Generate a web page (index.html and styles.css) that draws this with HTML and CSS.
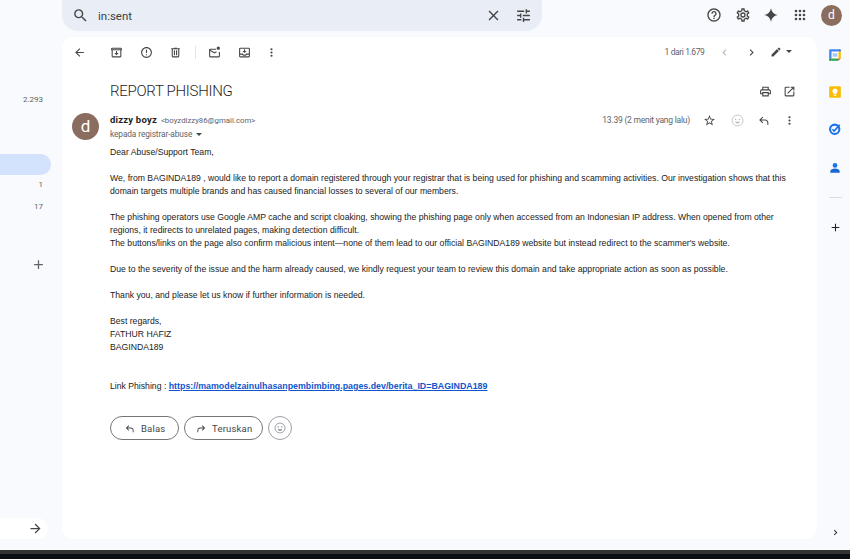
FILE: index.html
```html
<!DOCTYPE html>
<html lang="en">
<head>
    <meta charset="UTF-8">
    <title>REPORT PHISHING</title>
    <link rel="stylesheet" href="styles.css">
</head>
<body>
<div class="app">
    <div class="topbar">
        <div class="search">
            <svg class="icon-search" viewBox="0 0 24 24"><path d="M15.5 14h-.79l-.28-.27A6.47 6.47 0 0 0 16 9.5 6.5 6.5 0 1 0 9.5 16c1.61 0 3.09-.59 4.23-1.57l.27.28v.79l5 4.99L20.49 19l-4.99-5zm-6 0C7.01 14 5 11.99 5 9.5S7.01 5 9.5 5 14 7.01 14 9.5 11.99 14 9.5 14z"/></svg>
            <div class="query">in:sent</div>
            <svg class="icon-close" viewBox="0 0 24 24"><path d="M19 6.41 17.59 5 12 10.59 6.41 5 5 6.41 10.59 12 5 17.59 6.41 19 12 13.41 17.59 19 19 17.59 13.41 12z"/></svg>
            <svg class="icon-tune" viewBox="0 0 24 24"><path d="M3 17v2h6v-2H3zM3 5v2h10V5H3zm10 16v-2h8v-2h-8v-2h-2v6h2zM7 9v2H3v2h4v2h2V9H7zm14 4v-2H11v2h10zm-6-4h2V7h4V5h-4V3h-2v6z"/></svg>
        </div>
        <div class="top-icons">
            <svg class="top-icon" viewBox="0 0 24 24"><path d="M11 18h2v-2h-2v2zm1-16C6.48 2 2 6.48 2 12s4.48 10 10 10 10-4.48 10-10S17.52 2 12 2zm0 18c-4.41 0-8-3.59-8-8s3.59-8 8-8 8 3.59 8 8-3.59 8-8 8zm0-14c-2.21 0-4 1.79-4 4h2c0-1.1.9-2 2-2s2 .9 2 2c0 2-3 1.75-3 5h2c0-2.25 3-2.5 3-5 0-2.21-1.79-4-4-4z"/></svg>
            <svg class="top-icon" viewBox="0 0 24 24"><path d="M19.43 12.98c.04-.32.07-.64.07-.98s-.03-.66-.07-.98l2.11-1.65a.5.5 0 0 0 .12-.64l-2-3.46a.5.5 0 0 0-.61-.22l-2.49 1a7.3 7.3 0 0 0-1.69-.98l-.38-2.65A.49.49 0 0 0 14 2h-4a.49.49 0 0 0-.49.42l-.38 2.65c-.61.25-1.17.59-1.69.98l-2.49-1a.5.5 0 0 0-.61.22l-2 3.46a.49.49 0 0 0 .12.64l2.11 1.65c-.04.32-.07.65-.07.98s.03.66.07.98l-2.11 1.65a.5.5 0 0 0-.12.64l2 3.46c.12.22.39.3.61.22l2.49-1c.52.4 1.08.73 1.69.98l.38 2.65c.03.24.24.42.49.42h4c.25 0 .46-.18.49-.42l.38-2.65c.61-.25 1.17-.59 1.69-.98l2.49 1c.23.09.49 0 .61-.22l2-3.46a.5.5 0 0 0-.12-.64l-2.11-1.65zM17.45 11.27c.04.31.05.52.05.73s-.02.43-.05.73l-.14 1.13.89.7 1.08.84-.7 1.21-1.27-.51-1.04-.42-.9.68c-.43.32-.84.56-1.25.73l-1.06.43-.16 1.13-.2 1.35h-1.4l-.19-1.35-.16-1.13-1.06-.43a5.7 5.7 0 0 1-1.23-.71l-.91-.7-1.06.43-1.27.51-.7-1.21 1.08-.84.89-.7-.14-1.13A8.3 8.3 0 0 1 6.5 12c0-.2.02-.43.05-.73l.14-1.13-.89-.7-1.08-.84.7-1.21 1.27.51 1.04.42.9-.68c.43-.32.84-.56 1.25-.73l1.06-.43.16-1.13.2-1.35h1.39l.19 1.35.16 1.13 1.06.43c.43.18.83.41 1.23.71l.91.7 1.06-.43 1.27-.51.7 1.21-1.07.85-.89.7.14 1.13zM12 8a4 4 0 1 0 0 8 4 4 0 0 0 0-8zm0 6a2 2 0 1 1 0-4 2 2 0 0 1 0 4z"/></svg>
            <svg class="top-icon" viewBox="0 0 24 24"><path d="M12 2c.9 5.6 4.4 9.1 10 10-5.6.9-9.1 4.4-10 10-.9-5.6-4.4-9.1-10-10 5.6-.9 9.1-4.4 10-10z"/></svg>
            <svg class="top-icon" viewBox="0 0 24 24"><path d="M6 8a2 2 0 1 0 0-4 2 2 0 0 0 0 4zm6 12a2 2 0 1 0 0-4 2 2 0 0 0 0 4zm-6 0a2 2 0 1 0 0-4 2 2 0 0 0 0 4zm0-6a2 2 0 1 0 0-4 2 2 0 0 0 0 4zm6 0a2 2 0 1 0 0-4 2 2 0 0 0 0 4zm6-6a2 2 0 1 0 0-4 2 2 0 0 0 0 4zm-6 0a2 2 0 1 0 0-4 2 2 0 0 0 0 4zm6 6a2 2 0 1 0 0-4 2 2 0 0 0 0 4zm0 6a2 2 0 1 0 0-4 2 2 0 0 0 0 4z"/></svg>
            <div class="avatar-small">d</div>
        </div>
    </div>

    <div class="middle">
        <div class="sidebar">
            <div class="count count-first">2.293</div>
            <div class="active-item"></div>
            <div class="count count-one">1</div>
            <div class="count count-two">17</div>
            <div class="plus-row">
                <svg class="icon-plus" viewBox="0 0 24 24"><path d="M19 13h-6v6h-2v-6H5v-2h6V5h2v6h6v2z"/></svg>
            </div>
            <div class="side-pill">
                <svg class="icon-arrow" viewBox="0 0 24 24"><path d="M12 4l-1.41 1.41L16.17 11H4v2h12.17l-5.58 5.59L12 20l8-8z"/></svg>
            </div>
        </div>

        <div class="card">
            <div class="toolbar">
                <svg class="tool tool-back" viewBox="0 0 24 24"><path d="M20 11H7.83l5.59-5.59L12 4l-8 8 8 8 1.41-1.41L7.83 13H20v-2z"/></svg>
                <svg class="tool" viewBox="0 0 24 24"><path d="M20 3H4a2 2 0 0 0-2 2v3h1v11a2 2 0 0 0 2 2h14a2 2 0 0 0 2-2V8h1V5a2 2 0 0 0-2-2zm-1 16H5V8h14v11zM4 6V5h16v1H4zm9 3h-2v4H8l4 4 4-4h-3V9z"/></svg>
                <svg class="tool" viewBox="0 0 24 24"><path d="M11 7h2v6h-2zm0 8h2v2h-2zm1-13C6.48 2 2 6.48 2 12s4.48 10 10 10 10-4.48 10-10S17.52 2 12 2zm0 18c-4.41 0-8-3.59-8-8s3.59-8 8-8 8 3.59 8 8-3.59 8-8 8z"/></svg>
                <svg class="tool" viewBox="0 0 24 24"><path d="M15 4V3H9v1H4v2h1v13a2 2 0 0 0 2 2h10a2 2 0 0 0 2-2V6h1V4h-5zm2 15H7V6h10v13zM9 8h2v9H9zm4 0h2v9h-2z"/></svg>
                <div class="tool-sep"></div>
                <svg class="tool" viewBox="0 0 24 24"><path d="M4 6h11V4H4a2 2 0 0 0-2 2v12a2 2 0 0 0 2 2h16a2 2 0 0 0 2-2V10h-2v8H4V8l8 5 4.2-2.6-1.2-1.6L12 10.6 4 6zm15-6a3 3 0 1 0 0 6 3 3 0 0 0 0-6z" transform="translate(0 1)"/></svg>
                <svg class="tool tool-snooze" viewBox="0 0 24 24"><path d="M20 3H4a2 2 0 0 0-2 2v14a2 2 0 0 0 2 2h16a2 2 0 0 0 2-2V5a2 2 0 0 0-2-2zm0 16H4v-3h3.5c.7 1.2 2.4 2 4.5 2s3.800-.8 4.500-2H20v3zm0-5h-5c0 1.200-1.300 2-3 2s-3-.8-3-2H4V5h16v9zm-7-8h-2v3H8l4 4 4-4h-3V6z"/></svg>
                <svg class="tool tool-more" viewBox="0 0 24 24"><path d="M12 8a2 2 0 1 0 0-4 2 2 0 0 0 0 4zm0 2a2 2 0 1 0 0 4 2 2 0 0 0 0-4zm0 6a2 2 0 1 0 0 4 2 2 0 0 0 0-4z"/></svg>
                <div class="pager">1 dari 1.679</div>
                <svg class="chev chev-off" viewBox="0 0 24 24"><path d="M15.41 7.41 14 6l-6 6 6 6 1.41-1.41L10.830 12z"/></svg>
                <svg class="chev" viewBox="0 0 24 24"><path d="M8.590 16.590 10 18l6-6-6-6-1.410 1.410L13.170 12z"/></svg>
                <svg class="tool-pen" viewBox="0 0 24 24"><path d="M3 17.250V21h3.750L17.810 9.940l-3.750-3.750L3 17.250zM20.710 7.040a1 1 0 0 0 0-1.410l-2.340-2.340a1 1 0 0 0-1.410 0l-1.830 1.830 3.750 3.750 1.830-1.830z"/></svg>
                <div class="caret"></div>
            </div>

            <div class="subject-row">
                <div class="subject">REPORT PHISHING</div>
                <svg class="subject-icon" viewBox="0 0 24 24"><path d="M19 8h-1V3H6v5H5a3 3 0 0 0-3 3v6h4v4h12v-4h4v-6a3 3 0 0 0-3-3zM8 5h8v3H8V5zm8 14H8v-4h8v4zm2-4v-2H6v2H4v-4a1 1 0 0 1 1-1h14a1 1 0 0 1 1 1v4h-2z"/></svg>
                <svg class="subject-icon" viewBox="0 0 24 24"><path d="M19 19H5V5h7V3H5a2 2 0 0 0-2 2v14a2 2 0 0 0 2 2h14a2 2 0 0 0 2-2v-7h-2v7zM14 3v2h3.590l-9.830 9.830 1.410 1.410L19 6.410V10h2V3h-7z"/></svg>
            </div>

            <div class="message">
                <div class="avatar">d</div>
                <div class="message-main">
                    <div class="sender-row">
                        <div class="sender-info">
                            <div class="sender"><span class="sender-name">dizzy boyz</span> <span class="sender-mail">&lt;boyzdizzy86@gmail.com&gt;</span></div>
                            <div class="recipient">kepada registrar-abuse <span class="caret caret-small"></span></div>
                        </div>
                        <div class="msg-time">13.39 (2 menit yang lalu)</div>
                        <svg class="msg-icon msg-star" viewBox="0 0 24 24"><path d="M22 9.240l-7.190-.62L12 2 9.190 8.630 2 9.240l5.460 4.730L5.820 21 12 17.270 18.180 21l-1.630-7.030L22 9.240zM12 15.400l-3.760 2.270 1-4.280-3.320-2.880 4.380-.38L12 6.100l1.710 4.040 4.380.38-3.320 2.880 1 4.280L12 15.400z"/></svg>
                        <svg class="msg-icon" viewBox="0 0 24 24"><circle cx="12" cy="12" r="10" fill="none" stroke="#b5b8bb" stroke-width="1.500"/><circle cx="8.500" cy="10" r="1.300" fill="#b5b8bb"/><circle cx="15.500" cy="10" r="1.300" fill="#b5b8bb"/><path d="M7.500 14.500h9c-.6 2-2.400 3-4.500 3s-3.900-1-4.500-3z" fill="#b5b8bb"/></svg>
                        <svg class="msg-icon" viewBox="0 0 24 24"><path d="M21 20h-2v-4c0-2.200-1.800-4-4-4H7.830l3.590 3.590L10 17l-6-6 6-6 1.420 1.410L7.830 10H15c3.300 0 6 2.700 6 6v4z"/></svg>
                        <svg class="msg-icon msg-more" viewBox="0 0 24 24"><path d="M12 8a2 2 0 1 0 0-4 2 2 0 0 0 0 4zm0 2a2 2 0 1 0 0 4 2 2 0 0 0 0-4zm0 6a2 2 0 1 0 0 4 2 2 0 0 0 0-4z"/></svg>
                    </div>
                    <div class="body-text">
                        <p>Dear Abuse/Support Team,</p>
                        <p>We, from BAGINDA189 , would like to report a domain registered through your registrar that is being used for phishing and scamming activities. Our investigation shows that this<br>domain targets multiple brands and has caused financial losses to several of our members.</p>
                        <p>The phishing operators use Google AMP cache and script cloaking, showing the phishing page only when accessed from an Indonesian IP address. When opened from other<br>regions, it redirects to unrelated pages, making detection difficult.<br>The buttons/links on the page also confirm malicious intent—none of them lead to our official BAGINDA189 website but instead redirect to the scammer's website.</p>
                        <p>Due to the severity of the issue and the harm already caused, we kindly request your team to review this domain and take appropriate action as soon as possible.</p>
                        <p>Thank you, and please let us know if further information is needed.</p>
                        <p>Best regards,<br>FATHUR HAFIZ<br>BAGINDA189</p>
                        <p class="link-line">Link Phishing : <a class="phish-link" href="#">https://mamodelzainulhasanpembimbing.pages.dev/berita_ID=BAGINDA189</a></p>
                    </div>
                    <div class="actions">
                        <div class="action-btn btn-reply">
                            <svg class="btn-icon" viewBox="0 0 24 24"><path d="M21 20h-2v-4c0-2.200-1.800-4-4-4H7.830l3.590 3.590L10 17l-6-6 6-6 1.420 1.410L7.830 10H15c3.300 0 6 2.700 6 6v4z"/></svg>
                            Balas
                        </div>
                        <div class="action-btn btn-forward">
                            <svg class="btn-icon" viewBox="0 0 24 24"><path d="M3 20h2v-4c0-2.200 1.800-4 4-4h7.170l-3.590 3.590L14 17l6-6-6-6-1.420 1.410L16.170 10H9c-3.300 0-6 2.700-6 6v4z"/></svg>
                            Teruskan
                        </div>
                        <div class="emoji-btn">
                            <svg class="emoji-icon" viewBox="0 0 24 24"><circle cx="12" cy="12" r="10" fill="none" stroke="#80868b" stroke-width="1.500"/><circle cx="8.500" cy="10" r="1.300" fill="#80868b"/><circle cx="15.500" cy="10" r="1.300" fill="#80868b"/><path d="M7.500 14.500h9c-.6 2-2.400 3-4.500 3s-3.900-1-4.500-3z" fill="#80868b"/></svg>
                        </div>
                    </div>
                </div>
            </div>
        </div>

        <div class="rail">
            <svg class="rail-app" viewBox="0 0 24 24"><rect x="2" y="2" width="20" height="20" rx="2" fill="#fff"/><path d="M2 4a2 2 0 0 1 2-2h14v4H6v12H2z" fill="#4285f4"/><path d="M18 2h2a2 2 0 0 1 2 2v2h-4z" fill="#1967d2"/><path d="M18 6h4v12h-4z" fill="#fbbc04"/><path d="M6 18h12v4H6z" fill="#34a853"/><path d="M2 18h4v4H4a2 2 0 0 1-2-2z" fill="#188038"/><path d="M18 18h4l-4 4z" fill="#ea4335"/><rect x="8" y="9" width="8" height="6" fill="#a8c7fa"/></svg>
            <svg class="rail-app" viewBox="0 0 24 24"><rect x="2" y="2" width="20" height="20" rx="2" fill="#fbbc04"/><path d="M12 6a4.500 4.500 0 0 0-2.500 8.200V16h5v-1.800A4.500 4.500 0 0 0 12 6z" fill="#fff"/><rect x="10" y="17" width="4" height="1.500" fill="#fff"/></svg>
            <svg class="rail-app" viewBox="0 0 24 24"><circle cx="11.500" cy="12.500" r="8" fill="none" stroke="#1a73e8" stroke-width="3.500"/><path d="M7.500 12.500l3 3L20 5" fill="none" stroke="#1a73e8" stroke-width="2.800"/></svg>
            <svg class="rail-app rail-person" viewBox="0 0 24 24"><circle cx="12" cy="7.500" r="4" fill="#1a73e8"/><path d="M4 20v-2.500c0-2.500 4-4.500 8-4.500s8 2 8 4.500V20z" fill="#1967d2"/></svg>
            <div class="rail-sep"></div>
            <svg class="rail-plus" viewBox="0 0 24 24"><path d="M19 13h-6v6h-2v-6H5v-2h6V5h2v6h6v2z"/></svg>
            <svg class="rail-chev" viewBox="0 0 24 24"><path d="M8.590 16.590 10 18l6-6-6-6-1.410 1.410L13.170 12z"/></svg>
        </div>
    </div>

    <div class="taskbar"></div>
</div>
</body>
</html>
```

FILE: styles.css
```css
* {
    box-sizing: border-box;
}

html, body {
    margin: 0;
    height: 100%;
    overflow: hidden;
}

body {
    background-color: #f8fafd;
    font-family: "Liberation Sans", Arial, sans-serif;
    color: #202124;
}

svg {
    display: block;
    flex: none;
    fill: #444746;
}

.app {
    display: flex;
    flex-direction: column;
    width: 850px;
    height: 559px;
}

/* top bar */
.topbar {
    display: flex;
    height: 37px;
    padding-left: 62px;
}

.search {
    display: flex;
    align-items: center;
    width: 480px;
    height: 31px;
    padding: 0 10px;
    background-color: #e9eef6;
    border-radius: 0 0 16px 16px;
}

.icon-search {
    width: 17px;
    height: 17px;
}

.query {
    flex: 1;
    padding-left: 9px;
    font-family: Roboto, sans-serif;
    font-size: 11.500px;
    color: #3c4043;
}

.icon-close {
    width: 17px;
    height: 17px;
    margin-right: 13px;
}

.icon-tune {
    width: 17px;
    height: 17px;
}

.top-icons {
    display: flex;
    align-items: center;
    gap: 12.500px;
    height: 30px;
    margin-left: 164px;
}

.top-icon {
    width: 16px;
    height: 16px;
}

.avatar-small {
    width: 21px;
    height: 21px;
    margin-left: 1px;
    border-radius: 50%;
    background-color: #8b6d60;
    color: #ffffff;
    font-family: Roboto, sans-serif;
    font-size: 12px;
    line-height: 21px;
    text-align: center;
}

/* three columns */
.middle {
    display: flex;
    height: 502px;
}

.sidebar {
    display: flex;
    flex-direction: column;
    width: 62px;
    font-family: Roboto, sans-serif;
}

.count {
    padding-right: 19px;
    font-size: 8px;
    line-height: 12px;
    text-align: right;
    color: #5f6368;
}

.count-first {
    margin-top: 57px;
}

.active-item {
    width: 51px;
    height: 21px;
    margin-top: 48px;
    background-color: #d3e3fd;
    border-radius: 0 11px 11px 0;
}

.count-one {
    margin-top: 4px;
}

.count-two {
    margin-top: 10px;
}

.plus-row {
    display: flex;
    justify-content: flex-end;
    margin-top: 44px;
    padding-right: 16px;
}

.icon-plus {
    width: 15px;
    height: 15px;
    fill: #5f6368;
}

.side-pill {
    display: flex;
    align-items: center;
    justify-content: flex-end;
    width: 48px;
    height: 21px;
    margin-top: 246px;
    padding-right: 5px;
    background-color: #ffffff;
    border-radius: 0 11px 11px 0;
}

.icon-arrow {
    width: 15px;
    height: 15px;
}

.card {
    width: 755px;
    background-color: #ffffff;
    border-radius: 12px;
}

.toolbar {
    display: flex;
    align-items: center;
    height: 30px;
    padding: 0 25px 0 11px;
}

.tool {
    width: 13px;
    height: 13px;
    margin-right: 16.500px;
}

.tool-back {
    margin-right: 24px;
}

.tool-sep {
    width: 1px;
    height: 13px;
    margin-right: 12.500px;
    margin-left: -4px;
    background-color: #e4e5e6;
}

.tool-snooze {
    margin-right: 14px;
}

.tool-more {
    margin-right: 0;
}

.pager {
    margin-left: auto;
    font-family: Roboto, sans-serif;
    font-size: 8.500px;
    letter-spacing: -0.4px;
    color: #5f6368;
}

.chev {
    width: 13px;
    height: 13px;
    margin-left: 14px;
}

.pager + .chev {
    margin-left: 13px;
}

.chev-off {
    fill: #b4b7ba;
}

.tool-pen {
    width: 12px;
    height: 12px;
    margin-left: 12.500px;
}

.caret {
    display: inline-block;
    width: 0;
    height: 0;
    margin: 0 0 2px 4px;
    border-left: 3px solid transparent;
    border-right: 3px solid transparent;
    border-top: 3px solid #444746;
}

.caret-small {
    margin: 0 0 1px 2px;
}

.subject-row {
    display: flex;
    align-items: center;
    height: 32px;
    margin-top: 8px;
    padding: 0 21px 0 48px;
}

.subject {
    flex: 1;
    font-family: Roboto, "Liberation Sans", sans-serif;
    font-size: 15px;
    font-weight: 300;
    letter-spacing: -0.3px;
    color: #1f1f1f;
}

.subject-icon {
    width: 13px;
    height: 13px;
    margin-left: 11px;
}

.message {
    display: flex;
    padding-left: 10px;
}

.avatar {
    flex: none;
    width: 27px;
    height: 27px;
    margin-top: 6px;
    margin-right: 11px;
    border-radius: 50%;
    background-color: #8b6d60;
    color: #ffffff;
    font-family: Roboto, sans-serif;
    font-size: 17px;
    line-height: 27px;
    text-align: center;
}

.message-main {
    flex: 1;
    min-width: 0;
}

.sender-row {
    display: flex;
    align-items: flex-start;
    height: 39px;
    padding-top: 5px;
}

.sender-info {
    flex: 1;
}

.sender {
    line-height: 12px;
    font-family: Roboto, sans-serif;
}

.sender-name {
    font-size: 9.500px;
    font-weight: 700;
    letter-spacing: 0.2px;
    color: #1f1f1f;
}

.sender-mail {
    font-size: 7.800px;
    color: #5f6368;
}

.recipient {
    margin-top: 2px;
    font-family: Roboto, sans-serif;
    font-size: 8.300px;
    letter-spacing: -0.1px;
    line-height: 11px;
    color: #5f6368;
}

.msg-time {
    margin-top: 3px;
    margin-right: 13px;
    font-family: Roboto, sans-serif;
    font-size: 8.500px;
    letter-spacing: -0.23px;
    color: #5f6368;
}

.msg-icon {
    width: 13px;
    height: 13px;
    margin-top: 2px;
    margin-right: 13px;
}

.msg-star {
    margin-right: 15px;
}

.msg-more {
    margin-right: 21px;
}

.body-text {
    font-size: 8.660px;
    line-height: 13px;
    color: #222222;
}

.body-text p {
    margin: 0 0 13px;
    white-space: nowrap;
}

.link-line {
    padding-top: 13px;
}

.phish-link {
    color: #1155cc;
    font-size: 8.850px;
    font-weight: 700;
}

.actions {
    display: flex;
    gap: 5px;
    margin-top: 23px;
}

.action-btn {
    display: flex;
    align-items: center;
    height: 24px;
    border: 1px solid #747775;
    border-radius: 12px;
    font-family: Roboto, sans-serif;
    font-size: 9.500px;
    letter-spacing: 0.2px;
    color: #444746;
}

.btn-reply {
    width: 69px;
    padding-left: 13px;
}

.btn-forward {
    width: 79px;
    padding-left: 11px;
}

.btn-icon {
    width: 11px;
    height: 11px;
    margin-right: 6px;
}

.btn-forward .btn-icon {
    margin-right: 5px;
}

.emoji-btn {
    display: flex;
    align-items: center;
    justify-content: center;
    width: 24px;
    height: 24px;
    border: 1px solid #9aa0a6;
    border-radius: 50%;
}

.emoji-icon {
    width: 12px;
    height: 12px;
}

.rail {
    display: flex;
    flex-direction: column;
    align-items: center;
    width: 33px;
    padding-left: 3px;
}

.rail-app {
    width: 14px;
    height: 14px;
    margin-top: 23px;
}

.rail-app:first-child {
    margin-top: 11px;
}

.rail-person {
    margin-top: 25px;
}

.rail-sep {
    width: 13px;
    height: 1px;
    margin-top: 22px;
    background-color: #dadce0;
}

.rail-plus {
    width: 13px;
    height: 13px;
    margin-top: 23px;
    fill: #202124;
}

.rail-chev {
    width: 11px;
    height: 11px;
    margin-top: 293px;
    fill: #202124;
}

.taskbar {
    flex: 1;
    margin-top: 11px;
    background: linear-gradient(#333333 0, #333333 4px, #0b0e12 4px);
}
```
